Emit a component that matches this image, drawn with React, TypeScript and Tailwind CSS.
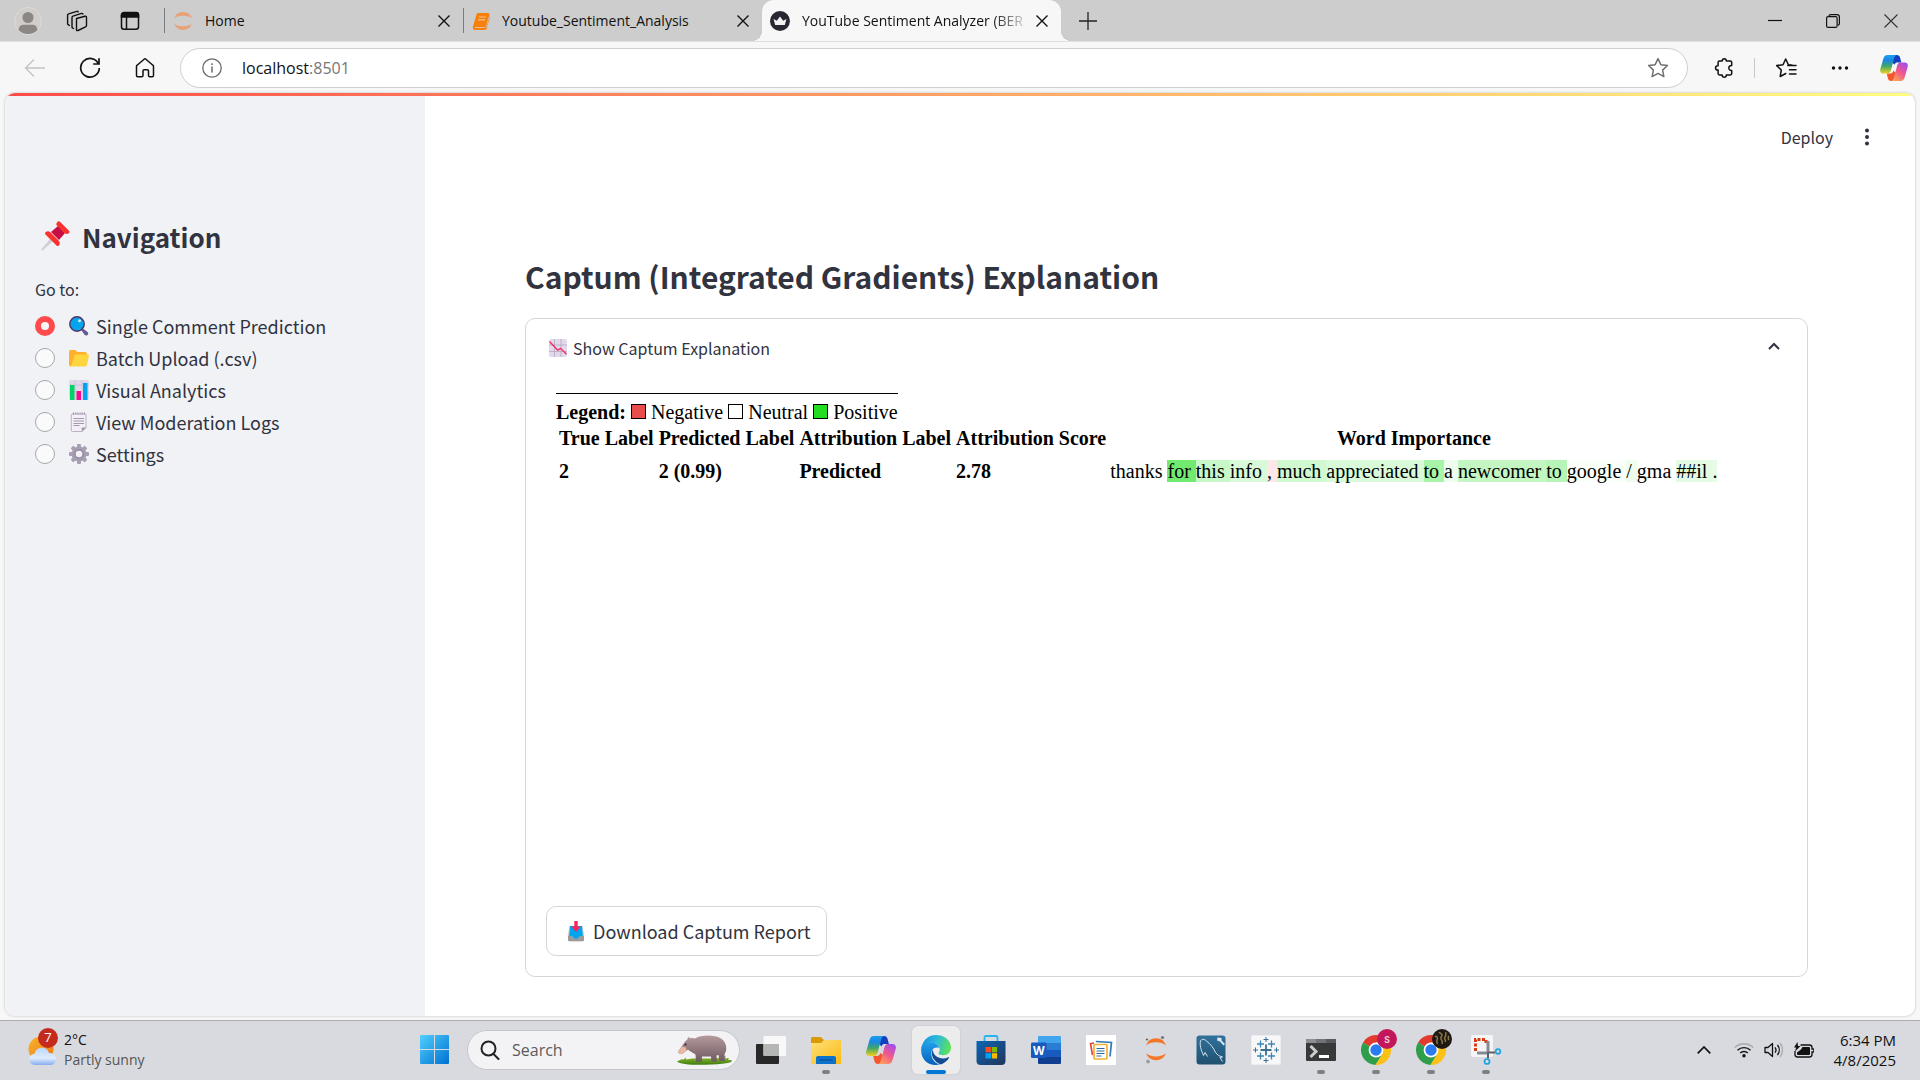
import type { ReactNode } from "react";

/* ---------- browser chrome icons ---------- */

const CloseIcon = ({ className = "size-[14px]" }: { className?: string }) => (
  <svg viewBox="0 0 14 14" className={className} fill="none" stroke="currentColor" strokeWidth="1.400">
    <path d="M1.5 1.5l11 11M12.5 1.5l-11 11" />
  </svg>
);

const AvatarIcon = () => (
  <svg viewBox="0 0 28 28" className="size-7">
    <circle cx="14" cy="14" r="13.5" fill="#d0cdca" stroke="#dedbd8" />
    <circle cx="14" cy="10.5" r="5.5" fill="#8b8784" />
    <path d="M4.500 23c.4-4 3-5.200 5.500-5.200h8c2.500 0 5.100 1.200 5.500 5.200A13 13 0 0 1 14 27a13 13 0 0 1-9.500-4z" fill="#8b8784" />
  </svg>
);

const WorkspacesIcon = () => (
  <svg viewBox="0 0 22 22" className="size-[22px]" fill="none" stroke="#111" strokeWidth="1.400" strokeLinejoin="round" strokeLinecap="round">
    <path d="M10.500 8.500l8.500-2.300c.8-.2 1.500.3 1.500 1.100v8.200c0 .6-.4 1.200-1 1.400l-7.500 3.600c-.8.400-1.500 0-1.500-.8V8.500z" />
    <path d="M7.500 18.500l-1-.6c-.4-.2-.5-.6-.5-1V7.400c0-.6.4-1.100 1-1.300l8.500-2.700c.6-.1 1 .1 1.400.6" />
    <path d="M3.500 15.500l-1.300-.8c-.4-.2-.6-.6-.6-1V5.100c0-.6.4-1.100 1-1.300L10.800 1.300c.6-.2 1.100 0 1.400.5" />
  </svg>
);

const TabActionsIcon = () => (
  <svg viewBox="0 0 20 20" className="size-5" fill="none" stroke="#111" strokeWidth="1.5">
    <rect x="1.500" y="1.800" width="17" height="16.500" rx="2.500" />
    <path d="M1.500 6V4a2.500 2.500 0 0 1 2.500-2.500h12A2.500 2.500 0 0 1 18.500 4v2z" fill="#111" />
    <path d="M6.500 6v12" />
  </svg>
);

const JupyterTabIcon = () => (
  <svg viewBox="0 0 20 20" className="size-5" fill="#e8a27a">
    <path d="M1 7.500a9.500 9.500 0 0 1 18 0C16 3.800 4 3.800 1 7.500z" />
    <path d="M1 12.500a9.500 9.500 0 0 0 18 0C16 16.200 4 16.200 1 12.500z" />
  </svg>
);

const NotebookIcon = () => (
  <svg viewBox="0 0 18 20" className="h-5 w-[18px]">
    <path d="M6.500 2h9.300c1.200 0 1.900.8 1.600 1.900L14 15.500c-.3 1-1 1.500-2 1.500H3.300c-1.100 0-.8 1.300.3 1.300H13" fill="#f77f0b" />
    <path d="M6.500 2C5.500 2 4.900 2.400 4.600 3.300L1 15.500c-.6 2 .3 3.400 2.300 3.400h9.200c1.200 0 1.900-.6 2.200-1.700L17.700 7c.2-.8 0-1.500-.6-1.800" fill="#f77f0b" />
    <path d="M3 16.500h9.500c1 0 1.700-.5 2-1.500L17 6" fill="none" stroke="#cdcdcd" strokeWidth=".8" />
    <path d="M7 6h7M6.200 8.800h7" stroke="#f8c493" strokeWidth="1.200" />
  </svg>
);

const CrownIcon = () => (
  <svg viewBox="0 0 20 20" className="size-5">
    <circle cx="10" cy="10" r="10" fill="#262730" />
    <path d="M3.500 8l3.300 1.700L10 5.500l3.200 4.200L16.500 8l-1.700 6H5.200z" fill="#f2f2f4" />
  </svg>
);

const BackIcon = () => (
  <svg viewBox="0 0 22 22" className="size-[22px]" fill="none" stroke="#c4c4c4" strokeWidth="1.400">
    <path d="M21 11H1.500M10 2.500L1.500 11l8.500 8.500" />
  </svg>
);
const ReloadIcon = () => (
  <svg viewBox="0 0 22 22" className="size-[22px]" fill="none" stroke="#111" strokeWidth="1.700">
    <path d="M19.500 7A9.300 9.300 0 1 0 20.300 11M20 1.200V7h-5.800" />
  </svg>
);
const HomeIcon = () => (
  <svg viewBox="0 0 20 20" className="size-5" fill="none" stroke="#111" strokeWidth="1.500" strokeLinejoin="round">
    <path d="M1.500 8.500c0-.6.200-1 .6-1.300l7-6c.5-.4 1.300-.4 1.800 0l7 6c.4.300.6.700.6 1.300v9c0 .8-.5 1.300-1.300 1.300h-2.400c-.8 0-1.300-.5-1.300-1.300v-4.700c0-.6-.4-1-1-1H9c-.6 0-1 .4-1 1v4.700c0 .8-.5 1.300-1.300 1.300H2.800c-.8 0-1.300-.5-1.300-1.300z" />
  </svg>
);
const InfoIcon = () => (
  <svg viewBox="0 0 20 20" className="size-5" fill="none" stroke="#6a6a6a" strokeWidth="1.300">
    <circle cx="10" cy="10" r="9.200" />
    <path d="M10 8.500v6M10 5.300v1.600" strokeWidth="1.500" />
  </svg>
);
const StarIcon = () => (
  <svg viewBox="0 0 21 21" className="size-[22px]" fill="none" stroke="#6e6e6e" strokeWidth="1.400" strokeLinejoin="round">
    <path d="M10.500 1.500l2.700 5.800 6.300.8-4.600 4.400 1.200 6.300-5.600-3.100-5.600 3.100 1.200-6.300L1.500 8.100l6.300-.8z" />
  </svg>
);
const PuzzleIcon = () => (
  <svg viewBox="0 0 20 20" className="size-5" fill="none" stroke="#111" strokeWidth="1.500" strokeLinejoin="round">
    <path d="M5.500 3h2.700c0-3 4.100-3 4.100 0h4c.8 0 1.400.6 1.400 1.400v3c-3.800-.2-3.800 5.300 0 5.100v3c0 .8-.6 1.400-1.400 1.400h-4c0 3-4.100 3-4.100 0H5.500c-.8 0-1.400-.6-1.400-1.400v-3.500c-3.400 0-3.400-4.200 0-4.200V4.400C4.100 3.600 4.700 3 5.500 3z" />
  </svg>
);
const FavoritesIcon = () => (
  <svg viewBox="0 0 22 22" className="size-[22px]" fill="none" stroke="#111" strokeWidth="1.500" strokeLinejoin="round" strokeLinecap="round">
    <path d="M12.800 8.500H21M14.500 12.800H21M14.500 17H21" />
    <path d="M17 8.200l-3.600-.5L10.700 2 8 7.700l-6.300.9 4.600 4.400L5.200 19.500l5.600-3" />
  </svg>
);
const DotsIcon = () => (
  <svg viewBox="0 0 18 6" className="h-1.5 w-[18px]" fill="#111">
    <circle cx="2.500" cy="3" r="1.700" />
    <circle cx="9" cy="3" r="1.700" />
    <circle cx="15.500" cy="3" r="1.700" />
  </svg>
);
const CopilotIcon = ({ id, className }: { id: string; className: string }) => (
  <svg viewBox="0 0 30 28" className={className}>
    <defs>
      <linearGradient id={id + "a"} x1="0" y1="0" x2="0" y2="1">
        <stop offset="0" stopColor="#1aa0f0" />
        <stop offset=".3" stopColor="#1c86e0" />
        <stop offset=".6" stopColor="#3fa868" />
        <stop offset="1" stopColor="#f5cf1c" />
      </linearGradient>
      <linearGradient id={id + "b"} x1=".8" y1="0" x2=".2" y2="1">
        <stop offset="0" stopColor="#a34bf0" />
        <stop offset=".5" stopColor="#f0588c" />
        <stop offset="1" stopColor="#ffa45c" />
      </linearGradient>
    </defs>
    <path d="M11 0h7c2 0 3 1 3.600 3l1.300 5h-3.800c-2 0-3 .5-3.500 2.500L13 8z" fill="#1240c0" />
    <path d="M19 28h-7c-2 0-3-1-3.600-3l-1.200-5h3.600c2 0 3-1 3.500-3l2.700 2z" fill="#f4572f" />
    <path d="M8 0h10c-1.500.3-2.300 1.500-2.800 3.200L11.500 17c-.6 2-1.700 3-3.700 3H3.500C.8 20-.4 18 .3 15L3.500 4C4.200 1.500 5.500 0 8 0z" fill={`url(#${id}a)`} />
    <path d="M22 28H12c1.500-.3 2.300-1.500 2.800-3.200L18.500 11c.6-2 1.700-3 3.700-3h4.300c2.700 0 3.900 2 3.200 5l-3.200 11c-.7 2.500-2 4-4.500 4z" fill={`url(#${id}b)`} />
  </svg>
);

/* ---------- emoji drawings ---------- */

const PinIcon = () => (
  <svg viewBox="0 0 30 30" className="size-[30px]">
    <path d="M10 18l3 2L3 29.300c-1 .8-2.300-.3-1.500-1.300z" fill="#cfd0d4" />
    <path d="M18 5l7 7-6 7-8-8z" fill="#c80d45" />
    <path d="M17 1.500c.8-1.500 2-1.700 3-.7l9 9c1 1 .7 2-.5 2.700-1.300.6-2.600.5-3.700-.2l-8-7.800c-.7-1-.5-2 .2-3zM5.800 11c1.500-1 3.300-.9 4.500.2l8.500 8.500c1.200 1.200 1.200 3.300.3 4.600-.7 1-1.800 1-2.600.2L5.500 13.500c-.8-.8-.7-1.800.3-2.500z" fill="#fb312f" />
  </svg>
);
const MagnifierIcon = () => (
  <svg viewBox="0 0 20 20" className="size-5">
    <path d="M12.500 11.500l6 4.500c2 2-.5 4.800-2.700 3l-4.500-6z" fill="#635994" />
    <circle cx="8" cy="8" r="7.200" fill="#00a6ed" stroke="#533566" strokeWidth="1.500" />
    <circle cx="10.500" cy="4.800" r="1.500" fill="#c7eefb" />
  </svg>
);
const FolderIcon = () => (
  <svg viewBox="0 0 20 20" className="size-5">
    <path d="M0 3.500C0 2.600.7 2 1.500 2h4.300c.5 0 .9.200 1.200.5L8.200 4H16c1.200 0 2 .8 2 2v8L3 18H1.500C.6 18 0 17.300 0 16.500z" fill="#ffb02e" />
    <path d="M5.500 7.500C5.800 6.800 6.400 6.500 7 6.500h11.500c1 0 1.600.8 1.400 1.700l-2 9c-.2.800-.8 1.300-1.600 1.300H2c-.5 0-1-.2-1-.6.8 0 1.300-.4 1.600-1.200z" fill="#fcd53f" />
  </svg>
);
const BarsIcon = () => (
  <svg viewBox="0 0 20 20" className="size-5">
    <rect width="20" height="20" rx="2" fill="#e1d8ec" />
    <path d="M6 0v20M13 0v20M0 5h20M0 12h20" stroke="#cdc4d6" />
    <rect x="1" y="5" width="4.500" height="15" fill="#00d26a" />
    <rect x="7.500" y="11" width="4.500" height="9" fill="#f70a8d" />
    <rect x="14" y="3" width="4.500" height="17" fill="#00a6ed" />
  </svg>
);
const NotepadIcon = () => (
  <svg viewBox="0 0 20 20" className="size-5">
    <path d="M3 2h13.500c.4 0 .5.300.5.700V16l-4 3.500H3.500c-.8 0-1.200-.4-1.200-1.200V3z" fill="#f3eef8" stroke="#b4acbc" strokeWidth=".9" />
    <path d="M17 15.500h-3.300c-.6 0-1 .4-1 1v3z" fill="#9b9b9b" />
    <path d="M4 1.500h12" stroke="#998ea4" strokeWidth="2" strokeDasharray="1 1.200" />
    <path d="M4.500 6.500h10.500M4.500 9h10.500M4.500 11.500h10.500M4.500 13.500h6" stroke="#998ea4" strokeWidth=".9" />
  </svg>
);
const GearIcon = () => (
  <svg viewBox="0 0 20 20" className="size-5">
    <g fill="#a99fb2">
      <rect x="8" y="0" width="4" height="20" rx="1" />
      <rect x="0" y="8" width="20" height="4" rx="1" />
      <rect x="8" y="0" width="4" height="20" rx="1" transform="rotate(45 10 10)" />
      <rect x="8" y="0" width="4" height="20" rx="1" transform="rotate(-45 10 10)" />
    </g>
    <circle cx="10" cy="10" r="6" fill="none" stroke="#a99fb2" strokeWidth="3" />
    <circle cx="10" cy="10" r="4.200" fill="#f0f2f6" stroke="#998ea4" strokeWidth="1.800" />
  </svg>
);
const ChartDownIcon = () => (
  <svg viewBox="0 0 18 18" className="size-[18px]">
    <rect width="18" height="18" rx="2" fill="#e1d8ec" />
    <path d="M5.500 0v18M12 0v18M0 6h18M0 12.500h18" stroke="#b4a8c0" strokeWidth=".8" />
    <path d="M.5 2.500l8 8.500 1-.2 2-1.500 6 6" fill="none" stroke="#f8255f" strokeWidth="1.300" />
  </svg>
);
const InboxIcon = () => (
  <svg viewBox="0 0 18 22" className="h-[22px] w-[18px]">
    <path d="M2.500 6h13L17 15v5c0 .8-.4 1.200-1.200 1.200H2.200C1.400 21.200 1 20.800 1 20v-5z" fill="#cdc4d6" />
    <path d="M1 16h4l2 2h4l2-2h4v4c0 .8-.4 1.200-1.200 1.200H2.200C1.400 21.200 1 20.800 1 20z" fill="#9b9b9b" />
    <path d="M3 6h12l.8 10H13l-2.500 2.500h-3L5 16H2.200z" fill="#00a6ed" />
    <path d="M7.300 1h3.400v5.500h3L9 12 4.300 6.500h3z" fill="#f8255f" />
  </svg>
);

/* ---------- taskbar icons ---------- */

const WeatherIcon = () => (
  <svg viewBox="0 0 30 32" className="h-8 w-[30px]">
    <defs>
      <linearGradient id="sun" x1="0" y1="0" x2="1" y2="1">
        <stop offset="0" stopColor="#f8b62d" />
        <stop offset="1" stopColor="#ee7412" />
      </linearGradient>
      <linearGradient id="cloud" x1="0" y1="0" x2="0" y2="1">
        <stop offset="0" stopColor="#b9d7fb" />
        <stop offset=".6" stopColor="#e0ecfd" />
        <stop offset="1" stopColor="#84aef0" />
      </linearGradient>
    </defs>
    <circle cx="13" cy="15" r="12.500" fill="url(#sun)" />
    <path d="M7 31a5.600 5.600 0 0 1-.5-11.200A7.500 7.500 0 0 1 21 19a6 6 0 0 1 2 12z" fill="url(#cloud)" />
  </svg>
);
const WindowsIcon = () => (
  <svg viewBox="0 0 29 29" className="size-[29px]">
    <defs>
      <linearGradient id="win" x1="0" y1="0" x2="1" y2="1">
        <stop offset="0" stopColor="#4fd0ff" />
        <stop offset="1" stopColor="#0070d0" />
      </linearGradient>
    </defs>
    <path d="M1 0h13v14H0V1a1 1 0 0 1 1-1zM15 0h13a1 1 0 0 1 1 1v13H15zM0 15h14v14H1a1 1 0 0 1-1-1zM15 15h14v13a1 1 0 0 1-1 1H15z" fill="url(#win)" />
  </svg>
);
const HippoIcon = () => (
  <svg viewBox="0 0 56 30" className="h-[30px] w-14">
    <defs>
      <linearGradient id="hip" x1="0" y1="0" x2="0" y2="1">
        <stop offset="0" stopColor="#b59a9b" />
        <stop offset="1" stopColor="#705962" />
      </linearGradient>
      <linearGradient id="grass" x1="0" y1="0" x2="0" y2="1">
        <stop offset="0" stopColor="#9ac52f" />
        <stop offset="1" stopColor="#3f7d12" />
      </linearGradient>
    </defs>
    <path d="M0 26.500l3-1.500 2-1 1 .8 3-2.300v2l6-1h24l5-1.500v1.500l5-3-1 3 4-.8-1 1.800 4 1c1 2-8 4-27 4.300C13 30 2 29 0 26.500z" fill="url(#grass)" />
    <path d="M13 3.500c2-.8 3.500-.5 5 0C23 .5 31 0 38 1.200c6 1 10 4.500 11 9.500.7 3.500 0 6.500-1.500 8.500L48 26h-5.500l-1-6-2 .5.500 6h-5.500l-.5-5H25v5.300h-6l-.5-7.300C15 17.500 12.500 16 11 14.500l-6 4.500c-2.500.5-4-1-3.500-3L6 9.500 8.500 6 10 5l1-2.500 1.700-.3z" fill="url(#hip)" />
    <path d="M1.500 16l3.500-4.500 4 1 .5 3-4 3.500c-2.500.7-4.500-.8-4-3z" fill="#eab7a0" />
    <circle cx="8.500" cy="9.500" r="1" fill="#2c2022" />
  </svg>
);
const TaskViewIcon = () => (
  <svg viewBox="0 0 30 28" className="h-7 w-[30px]">
    <rect x="0" y="8" width="23" height="20" rx="1" fill="#272827" />
    <rect x="7.500" y="0" width="22.500" height="20" rx="1" fill="#f8f8f8" />
    <path d="M7.500 8H23v12H8.500a1 1 0 0 1-1-1z" fill="#b5b6b6" />
  </svg>
);
const ExplorerIcon = () => (
  <svg viewBox="0 0 30 28" className="h-7 w-[30px]">
    <defs>
      <linearGradient id="fold" x1="0" y1="0" x2="1" y2="1">
        <stop offset="0" stopColor="#ffe07a" />
        <stop offset="1" stopColor="#fbb912" />
      </linearGradient>
    </defs>
    <path d="M0 2.500C0 1.600.6 1 1.500 1H9c.6 0 1 .2 1.400.6L13 4v6H0z" fill="#d99a05" />
    <path d="M0 7h10l3-3h16c.6 0 1 .4 1 1v22c0 .6-.4 1-1 1H1c-.6 0-1-.4-1-1z" fill="url(#fold)" />
    <path d="M5 28v-6c0-1.200.8-2 2-2h16c1.200 0 2 .8 2 2v6z" fill="#0d72c9" />
    <path d="M8.500 24h13" stroke="#0a4f9e" strokeWidth="1.200" />
  </svg>
);
const EdgeIcon = () => (
  <svg viewBox="0 0 30 30" className="size-[30px]">
    <defs>
      <linearGradient id="eg1" x1="0" y1=".3" x2="1" y2=".5">
        <stop offset="0" stopColor="#1493e0" />
        <stop offset=".5" stopColor="#2dbbd8" />
        <stop offset="1" stopColor="#5fe352" />
      </linearGradient>
      <linearGradient id="eg2" x1="0" y1="0" x2="0" y2="1">
        <stop offset="0" stopColor="#1fa0ea" />
        <stop offset="1" stopColor="#0660bd" />
      </linearGradient>
    </defs>
    <path d="M.3 14C1 6 7 0 15 0c9 0 15 6 15 12.500 0 5-3.500 7.700-7.500 7.700-3 0-5-1-5-2.300 0-.8 1.200-1.200 1.200-3.500 0-3.500-3.200-7-8.200-7C5.500 7.400 1.500 10.500.3 14z" fill="url(#eg1)" />
    <path d="M.2 13.500C1 9.500 5 7.300 9.500 7.300c4.700 0 8.200 2.700 8.500 5.700-5-2-8.500 2.500-7.500 7.500.7 4.500 4 8 8.500 9C8 32-.8 24.500.2 13.500z" fill="url(#eg2)" />
    <path d="M12 14.500c-3.500 5.500 1.500 12.500 7.500 15 3.500-1 7-3.800 8.500-6.700.3-.6-.1-.9-.7-.6-6.300 3.300-15.800-.2-15.300-7.700z" fill="#124b93" />
  </svg>
);
const StoreIcon = () => (
  <svg viewBox="0 0 30 30" className="size-[30px]">
    <defs>
      <linearGradient id="st" x1="0" y1="0" x2="1" y2="1">
        <stop offset="0" stopColor="#0a66b5" />
        <stop offset="1" stopColor="#233559" />
      </linearGradient>
    </defs>
    <path d="M.5 6h29v20c0 2.500-1.500 4-4 4h-21c-2.500 0-4-1.500-4-4z" fill="url(#st)" />
    <path d="M8.500 6V2.500c0-1 .5-1.500 1.500-1.500h10c1 0 1.500.5 1.500 1.500V6" fill="none" stroke="#25b6f0" strokeWidth="1.800" />
    <path d="M9.500 12H15v5.300H9.500z" fill="#f25022" />
    <path d="M15.800 12h5.300v5.300h-5.300z" fill="#7fba00" />
    <path d="M9.500 18.200H15v5.300H9.500z" fill="#00a4ef" />
    <path d="M15.800 18.200h5.300v5.300h-5.300z" fill="#ffb900" />
  </svg>
);
const WordIcon = () => (
  <svg viewBox="0 0 30 28" className="h-7 w-[30px]">
    <path d="M7 1a1 1 0 0 1 1-1h21a1 1 0 0 1 1 1v6H7z" fill="#41a5ee" />
    <path d="M7 7h23v7H7z" fill="#2b7cd3" />
    <path d="M7 14h23v7H7z" fill="#185abd" />
    <path d="M7 21h23v6a1 1 0 0 1-1 1H8a1 1 0 0 1-1-1z" fill="#103f91" />
    <rect x="0" y="6.500" width="15.500" height="15.500" rx="1.200" fill="#185abd" />
    <text x="7.700" y="18.500" textAnchor="middle" fontSize="12" fontWeight="700" fill="#fff" fontFamily="Open Sans, sans-serif">W</text>
  </svg>
);
const NotesIcon = () => (
  <svg viewBox="0 0 30 30" className="size-[30px]">
    <path d="M0 0h30v30H0z" fill="#fff" />
    <path d="M8 8l-3.500.7 2 11.500" fill="none" stroke="#e3463c" strokeWidth="1.700" />
    <path d="M10 6.500l15.500 1-1.500 14" fill="none" stroke="#3479b5" strokeWidth="1.700" />
    <rect x="8" y="9.500" width="13" height="14.500" rx="1" fill="#fff" stroke="#f2b233" strokeWidth="1.700" />
    <path d="M10.500 13.500h8M10.500 16h8M10.500 18.500h8M10.500 21h5" stroke="#2a6aa3" strokeWidth="1.200" />
  </svg>
);
const JupyterIcon = () => (
  <svg viewBox="0 0 24 30" className="h-[30px] w-6">
    <path d="M2 10.500a10.500 10.500 0 0 1 20 0C18 6 6 6 2 10.500zM2 18a10.500 10.500 0 0 0 20 0c-4 4.500-16 4.500-20 0z" fill="#f37726" />
    <circle cx="18.500" cy="2.500" r="1.600" fill="#767677" />
    <circle cx="3" cy="4.500" r="1.100" fill="#616262" />
    <circle cx="4" cy="26.500" r="1.900" fill="#9e9e9e" />
  </svg>
);
const MysqlIcon = () => (
  <svg viewBox="0 0 30 30" className="size-[30px]">
    <defs>
      <linearGradient id="my" x1="0" y1="0" x2="0" y2="1">
        <stop offset="0" stopColor="#31719c" />
        <stop offset="1" stopColor="#20516f" />
      </linearGradient>
    </defs>
    <rect x=".5" y=".5" width="29" height="29" rx="3" fill="url(#my)" />
    <path d="M7.500 20.500C5 15 3.500 10 4.500 6c1-2.500 4-2 6 0 4 3 7 7 9 11.500l3 3 4 1.500-2.500.5 2.500 4M7.500 20.500l1.500-3 2.500 4" fill="none" stroke="#d5e4ee" strokeWidth="1" strokeLinejoin="round" />
    <path d="M21.500 2.500l-.5 3 3 1 3.500 4 1.500-1.500-3.500-3.500V3z" fill="#dbe9f2" />
  </svg>
);
const TableauIcon = () => (
  <svg viewBox="0 0 30 30" className="size-[30px]" fill="none" stroke="#3a7096">
    <path d="M0 0h30v30H0z" fill="#f7f7f8" stroke="#e3e3e6" />
    <path d="M15 9.500v11M9.500 15h11" strokeWidth="1.800" />
    <path d="M9.500 5.500v7M6 9h7M20.500 5.500v7M17 9h7M9.500 17.500v7M6 21h7M20.500 17.500v7M17 21h7" strokeWidth="1.300" stroke="#3f87b2" />
    <path d="M15 2v5M12.500 4.500h5M15 23v5M12.500 25.500h5M4.500 12.500v5M2 15h5M25.500 12.500v5M23 15h5" strokeWidth="1" />
  </svg>
);
const TerminalIcon = () => (
  <svg viewBox="0 0 30 22" className="h-[22px] w-[30px]">
    <rect width="30" height="22" rx="1" fill="#383939" />
    <path d="M1 0h9v4H0V1a1 1 0 0 1 1-1z" fill="#8d8f92" />
    <path d="M10 0h10v4H10z" fill="#717376" />
    <path d="M20 0h9a1 1 0 0 1 1 1v3H20z" fill="#585a5c" />
    <path d="M4.500 7l5.500 5.500L4.500 18" fill="none" stroke="#ccc" strokeWidth="3" />
    <path d="M13 17.500h10" stroke="#fff" strokeWidth="3" />
  </svg>
);
const ChromeIcon = ({ badge }: { badge: ReactNode }) => (
  <svg viewBox="0 0 36 36" className="h-9 w-9">
    <path d="M15 21L2 13.500A15 15 0 0 1 28 13.500H15z" fill="#e23b2e" />
    <path d="M15 21L2 13.500A15 15 0 0 0 14.500 36L21.500 24.800z" fill="#2e9e4b" />
    <path d="M15 13.500h13A15 15 0 0 1 14.500 36l7-11.200z" fill="#fbc116" />
    <circle cx="15" cy="21" r="7.400" fill="#fff" />
    <circle cx="15" cy="21" r="5.700" fill="#2a7bf0" />
    {badge}
  </svg>
);
const BadgeS = () => (
  <>
    <circle cx="26" cy="10" r="10" fill="#c2185b" />
    <text x="26" y="13.500" textAnchor="middle" fontSize="9" fontWeight="700" fill="#f3cddc" fontFamily="Roboto, sans-serif">S</text>
  </>
);
const BadgePhoto = () => (
  <>
    <circle cx="26" cy="10" r="10" fill="#1f1912" />
    <path d="M19 8c2-2 3 1 2 3s1 3 0 4M23 3c1 2 3 1 3 3s-2 2-1 4 2 2 1 5M30 3c-1 2 1 3-1 5s2 3 0 5M33 7c-1 1-1 3 0 4" stroke="#8b7748" strokeWidth="1.500" fill="none" />
  </>
);
const SnipIcon = () => (
  <svg viewBox="0 0 30 30" className="size-[30px] overflow-visible" fill="none">
    <rect x="0" y="0" width="22" height="22" rx="2" fill="#f4f5f7" />
    <path d="M4.500 16V4.500H15V8" stroke="#dc3a12" strokeWidth="3" strokeDasharray="3 1.500" />
    <path d="M17 6v12M6 18h11" stroke="#868b92" strokeWidth="3" />
    <path d="M17 17v6.500M17 17.500h7" stroke="#5d6269" strokeWidth="2" />
    <circle cx="27" cy="16.500" r="2.300" stroke="#1fa2e2" strokeWidth="1.700" />
    <circle cx="16" cy="26.500" r="2.500" stroke="#1fa2e2" strokeWidth="1.700" />
  </svg>
);

/* ---------- pieces ---------- */

function Tab({ icon, title, active }: { icon: ReactNode; title: string; active?: boolean }) {
  return (
    <div
      className={
        active
          ? "relative flex h-full w-[299px] items-center gap-3 rounded-t-xl bg-[#f7f7f7] pr-3 pl-2"
          : "flex h-full w-[298px] items-center gap-3 pr-3 pl-2"
      }
    >
      {active && (
        <>
          <span className="absolute bottom-0 -left-2.5 size-2.5 bg-[radial-gradient(circle_at_0_0,#cdcdcd_10px,#f7f7f7_10px)]" />
          <span className="absolute -right-2.5 bottom-0 size-2.5 bg-[radial-gradient(circle_at_100%_0,#cdcdcd_10px,#f7f7f7_10px)]" />
        </>
      )}
      {icon}
      <span
        className={
          active
            ? "bg-[linear-gradient(to_right,#111_86%,#c4c4c4)] bg-clip-text whitespace-nowrap text-transparent"
            : "whitespace-nowrap"
        }
      >
        {title}
      </span>
      <button aria-label={`Close ${title}`} className="ml-auto">
        <CloseIcon />
      </button>
    </div>
  );
}

function NavOption({ icon, label, checked }: { icon: ReactNode; label: string; checked?: boolean }) {
  return (
    <label className="flex h-8 items-center">
      <input
        type="radio"
        name="page"
        defaultChecked={checked}
        className="size-5 shrink-0 appearance-none rounded-full border border-[#a6a8ae] bg-[#fafafb] checked:border-[6px] checked:border-[#ff4b4b]"
      />
      <span className="ml-[14px]">{icon}</span>
      <span className="ml-[7px] text-[18px]">{label}</span>
    </label>
  );
}

function TaskItem({ label, icon, state }: { label: string; icon: ReactNode; state?: "open" | "active" }) {
  return (
    <button aria-label={label} className="relative flex h-[58px] w-[55px] items-center justify-center">
      <span
        className={
          state === "active"
            ? "flex size-12 items-center justify-center rounded-md bg-[#ececed] shadow-[0_0_1px_1px_#d0d1d4]"
            : "flex size-12 items-center justify-center"
        }
      >
        {icon}
      </span>
      {state === "active" && <span className="absolute bottom-[5px] h-1 w-5 rounded-full bg-[#0078d4]" />}
      {state === "open" && <span className="absolute bottom-[5px] h-1 w-2 rounded-full bg-[#808083]" />}
    </button>
  );
}

const tokens = [
  { text: "thanks", className: "bg-[#fcfffc]" },
  { text: "for", className: "bg-[#70eb70]" },
  { text: "this", className: "bg-[#c8f7c8]" },
  { text: "info", className: "bg-[#d9fad9]" },
  { text: ",", className: "bg-[#fce8e8]" },
  { text: "much", className: "bg-[#d0f9d0]" },
  { text: "appreciated", className: "bg-[#d9fad9]" },
  { text: "to", className: "bg-[#a7f3a7]" },
  { text: "a", className: "bg-[#eefdee]" },
  { text: "newcomer", className: "bg-[#c3f6c3]" },
  { text: "to", className: "bg-[#b7f4b7]" },
  { text: "google", className: "bg-[#fafffa]" },
  { text: "/", className: "bg-[#eefdee]" },
  { text: "gma", className: "bg-white" },
  { text: "##il", className: "bg-[#e2fbe2]" },
  { text: ".", className: "bg-[#e6fce6]" },
];

function Attributions() {
  return (
    <div className="px-[10px] pt-4 font-['Liberation_Serif',serif] text-[20px] leading-[23px] text-black">
      <div className="mb-[3px] inline-block border-t border-black pt-1.5 leading-6">
        <b>Legend: </b>
        <span className="inline-block h-[15px] w-[15px] border border-black bg-[#e84d4d]" /> Negative{" "}
        <span className="inline-block h-[15px] w-[15px] border border-black bg-white" /> Neutral{" "}
        <span className="inline-block h-[15px] w-[15px] border border-black bg-[#22dd22]" /> Positive
      </div>
      <table className="border-separate border-spacing-x-[3px] border-spacing-y-0 text-left whitespace-nowrap">
        <thead>
          <tr>
            <th className="pr-[2px]">True Label</th>
            <th className="pr-[2px]">Predicted Label</th>
            <th className="pr-[2px]">Attribution Label</th>
            <th className="pr-px">Attribution Score</th>
            <th className="text-center">Word Importance</th>
          </tr>
        </thead>
        <tbody className="leading-[43px]">
          <tr>
            <td className="font-bold">2</td>
            <td className="font-bold">2 (0.99)</td>
            <td className="font-bold">Predicted</td>
            <td className="font-bold">2.78</td>
            <td>
              {tokens.map((t, i) => (
                <mark key={i} className={`text-black ${t.className}`}>
                  {t.text}{" "}
                </mark>
              ))}
            </td>
          </tr>
        </tbody>
      </table>
    </div>
  );
}

/* ---------- page ---------- */

export default function App() {
  return (
    <div className="flex min-h-screen flex-col bg-[#f7f7f7] font-['Open_Sans',sans-serif] text-[15px] text-[#111]">
      <header>
        <div className="flex h-[42px] items-center border-b border-[#e0e0e0] bg-[#cdcdcd] text-[14px]">
          <div className="flex w-[164px] items-center pl-3.5">
            <button aria-label="Profile"><AvatarIcon /></button>
            <button aria-label="Workspaces" className="ml-6"><WorkspacesIcon /></button>
            <button aria-label="Tab actions" className="ml-8"><TabActionsIcon /></button>
          </div>
          <span className="h-[25px] w-px bg-[#7c7c7c]" />
          <Tab icon={<JupyterTabIcon />} title="Home" />
          <span className="h-[25px] w-px bg-[#7c7c7c]" />
          <Tab icon={<NotebookIcon />} title="Youtube_Sentiment_Analysis" />
          <Tab icon={<CrownIcon />} title="YouTube Sentiment Analyzer (BER" active />
          <button aria-label="New tab" className="ml-[18px]">
            <svg viewBox="0 0 18 18" className="size-[18px]" stroke="#222" strokeWidth="1.300"><path d="M9 0v18M0 9h18" /></svg>
          </button>
          <div className="ml-auto flex items-center gap-11 pr-[22px]">
            <button aria-label="Minimize">
              <svg viewBox="0 0 14 14" className="size-[14px]" stroke="#111" strokeWidth="1.200"><path d="M0 6.500h14" /></svg>
            </button>
            <button aria-label="Restore">
              <svg viewBox="0 0 14 14" className="size-[14px]" stroke="#111" strokeWidth="1.200" fill="none">
                <rect x=".6" y="2.600" width="10.500" height="10.800" rx="1.500" />
                <path d="M3 2.400C3 1.400 3.500.7 4.500.7H11c1.500 0 2.400.9 2.400 2.400v6.400c0 1-.5 1.600-1.700 1.600" />
              </svg>
            </button>
            <button aria-label="Close window">
              <svg viewBox="0 0 14 14" className="size-[14px]" stroke="#333" strokeWidth="1.100"><path d="M.5.5l13 13M13.500.5l-13 13" /></svg>
            </button>
          </div>
        </div>
        <div className="flex h-[51px] items-center pr-3 pl-6">
          <button aria-label="Back"><BackIcon /></button>
          <button aria-label="Reload" className="ml-[33px]"><ReloadIcon /></button>
          <button aria-label="Home" className="ml-[34px]"><HomeIcon /></button>
          <div className="mr-[26px] ml-[25px] flex h-10 flex-1 items-center rounded-full border border-[#cfcfcf] bg-white pr-[18px] pl-[21px]">
            <InfoIcon />
            <span className="relative ml-5 flex-1 text-[16px]">
              <span aria-hidden="true">localhost<span className="text-[#767676]">:8501</span></span>
              <input aria-label="Address" defaultValue="localhost:8501" className="absolute inset-0 w-full bg-transparent text-transparent outline-none" />
            </span>
            <button aria-label="Favorite"><StarIcon /></button>
          </div>
          <button aria-label="Extensions"><PuzzleIcon /></button>
          <span className="mx-5 h-5 w-px bg-[#c8c8c8]" />
          <button aria-label="Favorites"><FavoritesIcon /></button>
          <button aria-label="Settings and more" className="mr-[31px] ml-[34px]"><DotsIcon /></button>
          <button aria-label="Copilot"><CopilotIcon id="cpa" className="h-[26px] w-7" /></button>
        </div>
      </header>

      <div className="mx-[5px] mb-1 flex flex-1 flex-col overflow-hidden rounded-[10px] bg-white font-['Noto_Sans_CJK_SC',sans-serif] text-[#31333f] shadow-[0_0_2px_1px_#dcdcde]">
        <div className="h-[3px] bg-[linear-gradient(to_right,#ff4b4b,#fffd80)]" />
        <div className="flex flex-1">
          <aside className="w-[420px] bg-[#f0f2f6] px-[30px] pt-[120px]">
            <h2 className="flex h-10 items-center text-[26px] font-bold">
              <span className="mr-3 ml-[5px]"><PinIcon /></span>Navigation
            </h2>
            <fieldset className="mt-5">
              <legend className="mb-2 h-[26px] text-[16px] leading-[26px]">Go to:</legend>
              <NavOption icon={<MagnifierIcon />} label="Single Comment Prediction" checked />
              <NavOption icon={<FolderIcon />} label="Batch Upload (.csv)" />
              <NavOption icon={<BarsIcon />} label="Visual Analytics" />
              <NavOption icon={<NotepadIcon />} label="View Moderation Logs" />
              <NavOption icon={<GearIcon />} label="Settings" />
            </fieldset>
          </aside>

          <main className="flex flex-1 flex-col pr-[107px] pb-[39px] pl-[100px]">
            <div className="-mr-[67px] flex h-[82px] items-center justify-end gap-[26px] text-[16px]">
              <button>Deploy</button>
              <button aria-label="Main menu" className="flex w-4 justify-center">
                <svg viewBox="0 0 6 18" className="h-[18px] w-1.5" fill="#31333f">
                  <circle cx="3" cy="2.500" r="2" /><circle cx="3" cy="9" r="2" /><circle cx="3" cy="15.500" r="2" />
                </svg>
              </button>
            </div>
            <h3 className="mt-[74px] h-12 text-[30px] leading-[48px] font-bold">Captum (Integrated Gradients) Explanation</h3>
            <section className="mt-[18px] flex flex-1 flex-col rounded-[10px] border border-[#d6d6d9] px-5 pb-5">
              <button className="flex h-[58px] w-full items-center gap-1.5 px-[3px] text-left text-[16px]">
                <ChartDownIcon />
                <span className="flex-1">Show Captum Explanation</span>
                <svg viewBox="0 0 12 8" className="mr-1 mb-1 h-2 w-3" fill="none" stroke="#31333f" strokeWidth="2"><path d="M1 7l5-5 5 5" /></svg>
              </button>
              <Attributions />
              <button className="mt-auto flex h-[50px] items-center gap-2 self-start rounded-[10px] border border-[#d6d6d9] pr-[15px] pl-5 text-[18px]">
                <InboxIcon />
                Download Captum Report
              </button>
            </section>
          </main>
        </div>
      </div>

      <footer className="flex h-[60px] items-center border-t border-[#abacb0] bg-[#d9dadf] pb-0.5">
        <div className="flex flex-1 items-center pl-6">
          <div className="relative ml-1">
            <WeatherIcon />
            <span className="absolute -top-1.5 left-2.5 flex size-5 items-center justify-center rounded-full bg-[#c42b1c] text-[13px] text-white">7</span>
          </div>
          <div className="ml-1.5 text-[14px] leading-5">
            <div>2°C</div>
            <div className="text-[#555]">Partly sunny</div>
          </div>
        </div>
        <div className="flex items-center">
          <TaskItem label="Start" icon={<WindowsIcon />} />
          <label className="mr-[3px] ml-[5px] flex h-10 w-[273px] items-center rounded-full border border-[#c6c7cb] bg-[#f3f3f5] pr-1.5 pl-3">
            <svg viewBox="0 0 20 20" className="size-5" fill="none" stroke="#222" strokeWidth="2" strokeLinecap="round"><circle cx="8.500" cy="8.500" r="7" /><path d="M13.500 14l5 5" /></svg>
            <input aria-label="Search" placeholder="Search" className="ml-3 min-w-0 flex-1 bg-transparent text-[16px] outline-none placeholder:text-[#5c5c5c]" />
            <HippoIcon />
          </label>
          <TaskItem label="Task view" icon={<TaskViewIcon />} />
          <TaskItem label="File Explorer" icon={<ExplorerIcon />} state="open" />
          <TaskItem label="Copilot" icon={<CopilotIcon id="cpb" className="h-7 w-[30px]" />} />
          <TaskItem label="Microsoft Edge" icon={<EdgeIcon />} state="active" />
          <TaskItem label="Microsoft Store" icon={<StoreIcon />} />
          <TaskItem label="Word" icon={<WordIcon />} />
          <TaskItem label="Notes" icon={<NotesIcon />} />
          <TaskItem label="Jupyter" icon={<JupyterIcon />} />
          <TaskItem label="MySQL Workbench" icon={<MysqlIcon />} />
          <TaskItem label="Tableau" icon={<TableauIcon />} />
          <TaskItem label="Terminal" icon={<TerminalIcon />} state="open" />
          <TaskItem label="Chrome, profile S" icon={<span className="mb-1.5 ml-1.5"><ChromeIcon badge={<BadgeS />} /></span>} state="open" />
          <TaskItem label="Chrome, second profile" icon={<span className="mb-1.5 ml-1.5"><ChromeIcon badge={<BadgePhoto />} /></span>} state="open" />
          <TaskItem label="Snipping Tool" icon={<SnipIcon />} state="open" />
        </div>
        <div className="flex flex-1 items-center justify-end pr-6">
          <button aria-label="Show hidden icons">
            <svg viewBox="0 0 14 8" className="h-2 w-3.5" fill="none" stroke="#111" strokeWidth="1.700"><path d="M.7 7.300L7 1l6.300 6.300" /></svg>
          </button>
          <svg viewBox="0 0 20 16" className="ml-[23px] h-4 w-5" fill="none" stroke="#111" strokeWidth="1.400">
            <path d="M.8 5.500a13 13 0 0 1 18.400 0" stroke="#a8a9ad" />
            <path d="M3.500 8.300a9.200 9.200 0 0 1 13 0M6.200 11a5.400 5.400 0 0 1 7.600 0" />
            <circle cx="10" cy="13.700" r="1.700" fill="#111" stroke="none" />
          </svg>
          <svg viewBox="0 0 20 16" className="ml-2.5 h-4 w-5" fill="none" stroke="#111" strokeWidth="1.300">
            <path d="M1 5.500h3L8.500 1.500v13L4 10.500H1z" strokeLinejoin="round" />
            <path d="M11 5.300a4.500 4.500 0 0 1 0 5.400M13.500 3a8 8 0 0 1 0 10" />
            <path d="M16 1a11 11 0 0 1 0 14" stroke="#a8a9ad" />
          </svg>
          <svg viewBox="0 0 20 16" className="ml-2.5 h-4 w-5" fill="#111">
            <path d="M6.500 3h9A2.500 2.500 0 0 1 18 5.500V7h1.200c.5 0 .8.300.8.800v1.400c0 .5-.3.800-.8.800H18v2.500a2.500 2.500 0 0 1-2.500 2.500h-12A2.500 2.500 0 0 1 1 12.500V9" fill="none" stroke="#111" strokeWidth="1.300" />
            <path d="M8.500 5H15a1 1 0 0 1 1 1v6a1 1 0 0 1-1 1H4a1 1 0 0 1-1-1v-1.500l4-3z" />
            <path d="M3.500 0L0 5.500h2.200L1 9.500l5.500-5.500H4z" />
          </svg>
          <div className="ml-5 text-right text-[15px] leading-5">
            <div>6:34 PM</div>
            <div>4/8/2025</div>
          </div>
        </div>
      </footer>
    </div>
  );
}
